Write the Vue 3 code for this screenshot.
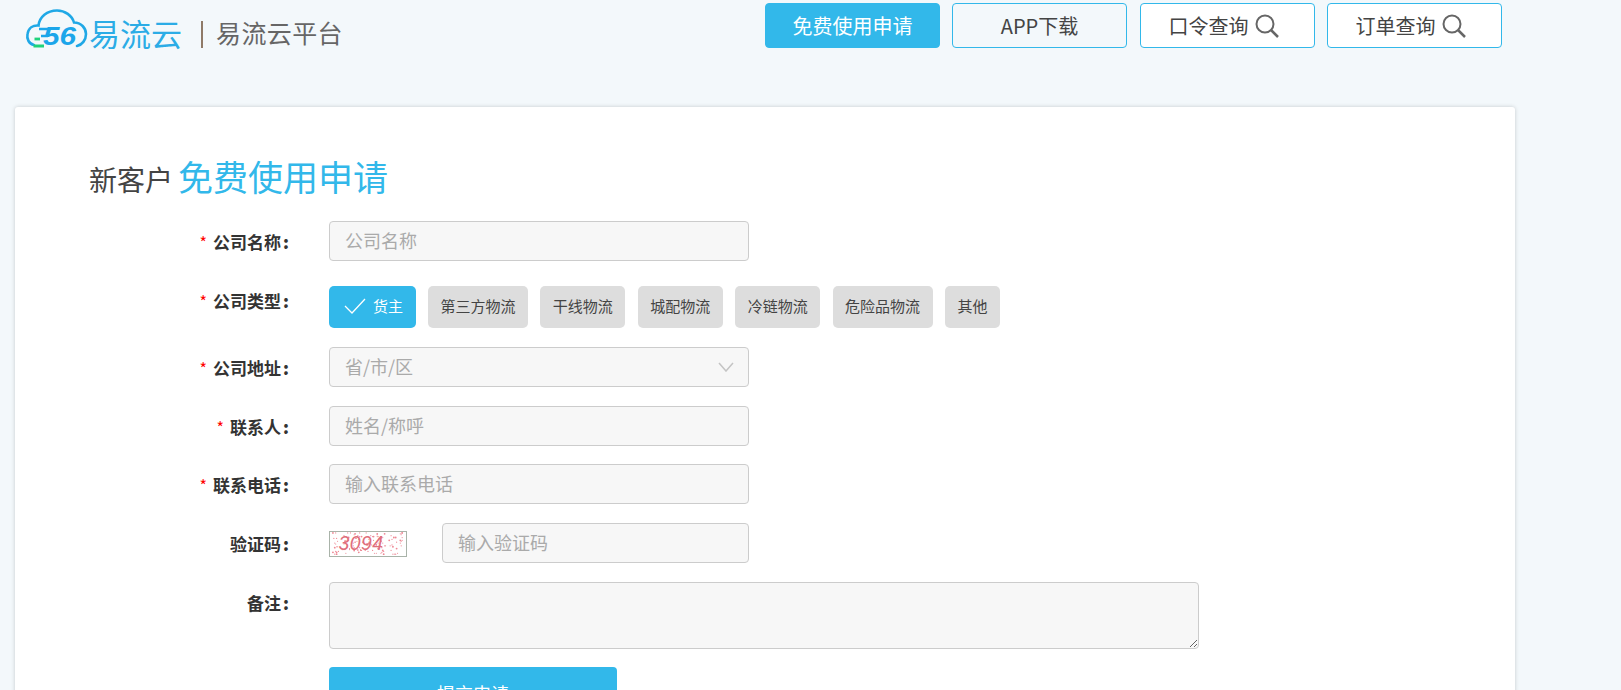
<script setup>
const chips = ['货主', '第三方物流', '干线物流', '城配物流', '冷链物流', '危险品物流', '其他']
const dots = Array.from({ length: 120 }, (_, i) => ({
  x: (i * 37 + (i * i) % 13) % 76 + 1,
  y: (i * 17 + (i * i * 3) % 11) % 24 + 1,
  r: i % 4 === 0 ? 1 : 0.65
}))
</script>

<template>
  <div class="page">
    <header class="top">
      <div class="brand">
        <svg class="cloud" viewBox="0 0 66 44" width="66" height="44" aria-hidden="true">
          <path d="M10 37 C5 36 2.500 31 3.500 26 C4.500 20 9 17 14.500 17.500 C15.500 9 23 2.500 33 2.500 C41 2.500 48 7.500 50 14.500 C57 14.500 62 20 62 26 C62 32 58 37 53 38" fill="none" stroke="#1fa8e6" stroke-width="2.600" stroke-linecap="round" />
          <path d="M15 21 H24 M17 28 H24" stroke="#1ba6ea" stroke-width="2.600" />
          <path d="M10.500 31 H16" stroke="#1fd37c" stroke-width="2.800" />
          <path d="M9.500 38 H20" stroke="#1fd37c" stroke-width="3" />
          <text class="mark" x="19" y="37" textLength="33" lengthAdjust="spacingAndGlyphs">56</text>
        </svg>
        <span class="brand-name">易流云</span>
        <span class="brand-sep"></span>
        <span class="brand-sub">易流云平台</span>
      </div>
      <nav class="actions">
        <a class="btn primary">免费使用申请</a>
        <a class="btn ghost">APP下载</a>
        <a class="btn white">口令查询
          <svg viewBox="0 0 24 24" width="24" height="24" aria-hidden="true"><circle cx="10" cy="10" r="8.500" fill="none" stroke="#666" stroke-width="2" /><path d="M16 16 L23 23" stroke="#666" stroke-width="2.500" /></svg>
        </a>
        <a class="btn white">订单查询
          <svg viewBox="0 0 24 24" width="24" height="24" aria-hidden="true"><circle cx="10" cy="10" r="8.500" fill="none" stroke="#666" stroke-width="2" /><path d="M16 16 L23 23" stroke="#666" stroke-width="2.500" /></svg>
        </a>
      </nav>
    </header>

    <main class="card">
      <h1 class="title"><span class="title-a">新客户</span><span class="title-b">免费使用申请</span></h1>

      <div class="row">
        <label class="label"><i>*</i>公司名称<b>:</b></label>
        <input class="field" placeholder="公司名称" />
      </div>

      <div class="row">
        <label class="label"><i>*</i>公司类型<b>:</b></label>
        <div class="chips">
          <span v-for="(c, i) in chips" :key="c" class="chip" :class="{ on: i === 0 }">
            <svg v-if="i === 0" viewBox="0 0 22 16" width="22" height="16" aria-hidden="true"><path d="M1 8 L8 15 L21 1" fill="none" stroke="#fff" stroke-width="1.300" /></svg>
            {{ c }}
          </span>
        </div>
      </div>

      <div class="row">
        <label class="label"><i>*</i>公司地址<b>:</b></label>
        <div class="select">
          <input class="field" placeholder="省/市/区" readonly />
          <svg class="chev" viewBox="0 0 16 10" width="16" height="10" aria-hidden="true"><path d="M1 1 L8 9 L15 1" fill="none" stroke="#c4c4c4" stroke-width="1.500" /></svg>
        </div>
      </div>

      <div class="row">
        <label class="label"><i>*</i>联系人<b>:</b></label>
        <input class="field" placeholder="姓名/称呼" />
      </div>

      <div class="row">
        <label class="label"><i>*</i>联系电话<b>:</b></label>
        <input class="field" placeholder="输入联系电话" />
      </div>

      <div class="row">
        <label class="label">验证码<b>:</b></label>
        <div class="captcha-wrap">
          <svg class="captcha" viewBox="0 0 78 26" width="78" height="26" aria-hidden="true">
            <circle v-for="(d, i) in dots" :key="i" :cx="d.x" :cy="d.y" :r="d.r" fill="#ee8a96" />
            <text class="captcha-text" x="7" y="20">3094</text>
          </svg>
          <input class="field short" placeholder="输入验证码" />
        </div>
      </div>

      <div class="row">
        <label class="label">备注<b>:</b></label>
        <textarea class="area"></textarea>
      </div>

      <div class="row">
        <span class="label"></span>
        <button class="submit">提交申请</button>
      </div>
    </main>
  </div>
</template>

<style>
html, body { margin: 0; overflow: hidden; height: 690px; background: #f3f8fb; }
</style>

<style scoped>
.page {
  height: 690px;
  overflow: hidden;
  background: #f3f8fb;
  font-family: "Noto Sans CJK SC", "Noto Sans", sans-serif;
  color: #333;
}
.top { display: flex; height: 107px; box-sizing: border-box; padding-left: 24px; }
.brand { display: flex; align-items: flex-start; padding-top: 8px; width: 741px; }
.cloud { display: block; }
.mark { font: italic 700 25px "Liberation Sans", sans-serif; fill: #1ba6ea; }
.brand-name { margin: 6px 0 0 -1px; font-size: 31px; line-height: 38px; color: #2bace6; }
.brand-sep { width: 2px; height: 27px; margin: 13px 13px 0 19px; background: #8f7a68; }
.brand-sub { margin-top: 7px; font-size: 25px; line-height: 34px; letter-spacing: 0.4px; color: #666; }
.actions { display: flex; gap: 12px; padding-top: 3px; }
.btn {
  display: flex;
  align-items: center;
  justify-content: center;
  gap: 6px;
  box-sizing: border-box;
  width: 175px;
  height: 45px;
  border: 1px solid #32b8ea;
  border-radius: 4px;
  font-size: 20px;
  color: #444;
}
.primary { background: #32b8ea; color: #fff; }
.ghost { margin-right: 1px; }
.white { padding-right: 8px; background: #fff; }
.card {
  box-sizing: border-box;
  width: 1500px;
  height: 700px;
  margin-left: 15px;
  padding-top: 44px;
  background: #fff;
  border-radius: 3px;
  box-shadow: 0 0 4px rgba(0, 0, 0, 0.18);
}
.title { display: flex; align-items: baseline; gap: 5px; margin: 0 0 20px 74px; font-weight: 400; height: 50px; line-height: 50px; }
.title-a { font-size: 28px; color: #444; }
.title-b { font-size: 35px; color: #32b8ea; }
.row { display: flex; align-items: flex-start; margin-bottom: 18.67px; }
.label {
  flex: none;
  width: 274px;
  height: 39px;
  margin: 1px 40px 0 0;
  line-height: 40px;
  text-align: right;
  font-size: 17px;
  font-weight: 700;
  color: #333;
}
.label i { margin-right: 6px; color: #f00; font-size: 16px; font-style: normal; font-weight: 400; }
.label b { margin-left: 2px; }
.field {
  display: block;
  box-sizing: border-box;
  width: 420px;
  height: 40px;
  padding: 0 15px 2px;
  border: 1.5px solid #ccc;
  border-radius: 4px;
  outline: none;
  background: #f7f7f7;
  font: 18px "Noto Sans CJK SC", sans-serif;
  color: #333;
}
.field::placeholder { color: #aaa; opacity: 1; }
.select { position: relative; }
.chev { position: absolute; right: 15px; top: 15px; }
.chips { display: flex; gap: 12.4px; margin-top: 6.67px; }
.chip {
  display: flex;
  align-items: center;
  box-sizing: border-box;
  height: 42px;
  padding: 0 12.5px 3px;
  border-radius: 5px;
  background: #dddddd;
  font-size: 15px;
  color: #444;
}
.chip.on { padding: 0 12.5px 3px 15px; gap: 7px; background: #32b8ea; color: #fff; }
.captcha-wrap { display: flex; align-items: center; gap: 35px; }
.captcha { display: block; box-sizing: border-box; margin-top: 2px; border: 1px solid #a9b3a9; background: #fff; }
.captcha-text { font: italic 21px "Liberation Sans", sans-serif; fill: #df6f7c; letter-spacing: 0.5px; }
.field.short { width: 307px; }
.area {
  display: block;
  box-sizing: border-box;
  width: 870px;
  height: 67px;
  border: 1.5px solid #ccc;
  border-radius: 4px;
  outline: none;
  background: #f7f7f7;
}
.submit {
  width: 288px;
  height: 52px;
  border: 0;
  border-radius: 4px;
  background: #32b8ea;
  color: #fff;
  font: 18px "Noto Sans CJK SC", sans-serif;
}
</style>
